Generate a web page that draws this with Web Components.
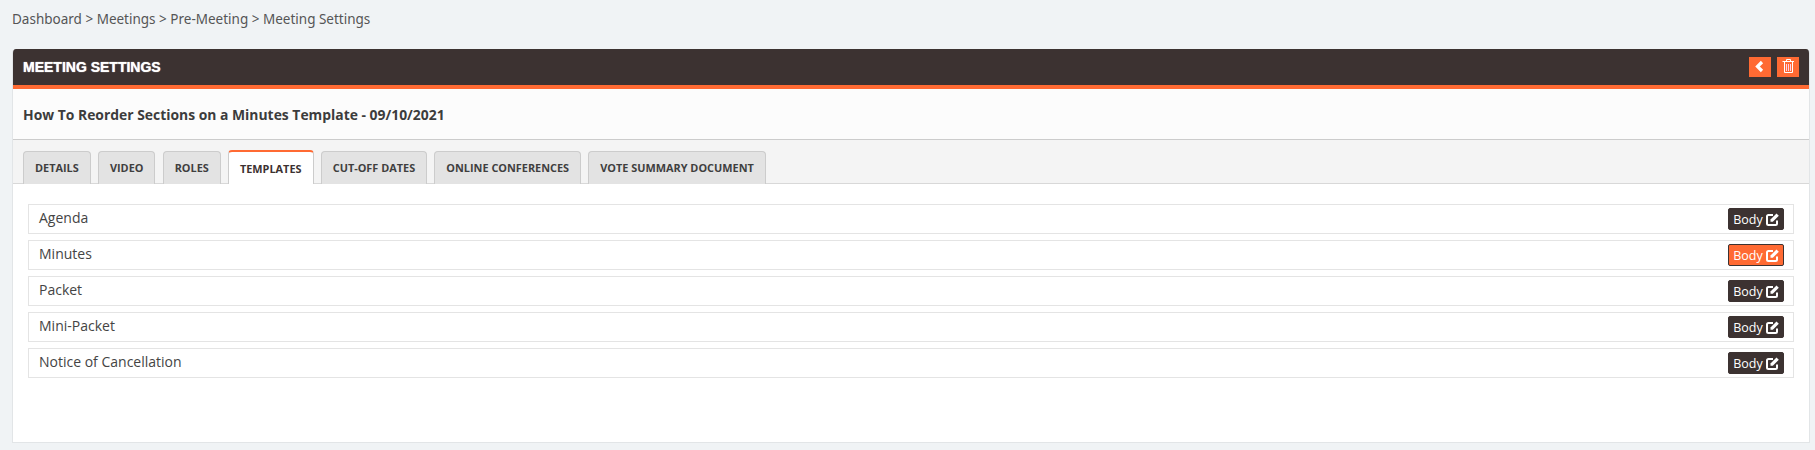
<!DOCTYPE html>
<html>
<head>
<meta charset="utf-8">
<title>Meeting Settings</title>
<style>
  html, body { margin: 0; height: 450px; overflow: hidden; }
  body { background: #f0f3f5; font-family: "Open Sans", sans-serif; color: #3c3231; }
</style>
</head>
<body>
<template id="crumbs-tpl">
  <style>
    :host { display: block; height: 49px; box-sizing: border-box; padding: 10px 0 0 12px; font: 13.5px/18px "Noto Sans", sans-serif; color: #555; }
  </style>
  <slot></slot>
</template>

<template id="panel-tpl">
  <style>
    :host { display: block; margin: 0 5px 0 12px; height: 394px; box-sizing: border-box; background: #fff; border: 1px solid #e2e5e7; border-top: 0; border-radius: 4px 4px 0 0; overflow: hidden; }
    header { height: 40px; box-sizing: border-box; background: #3c3231; border-bottom: 4px solid #ff6a33; display: flex; align-items: center; justify-content: space-between; padding: 0 10px; }
    h1 { margin: 0; font: bold 14px "Liberation Sans", sans-serif; color: #fff; text-shadow: 0 0 1px #fff; }
    .actions { display: flex; gap: 6px; }
    .sub { height: 51px; box-sizing: border-box; background: #fcfcfc; border-bottom: 1px solid #ccc; padding: 0 10px; display: flex; align-items: center; font: bold 13.9px "Open Sans", sans-serif; color: #3c3c3c; }
    .tabs { background: #f4f4f4; height: 44px; box-sizing: border-box; border-bottom: 1px solid #d8d8d8; padding: 10px 0 0 10px; display: flex; align-items: flex-end; gap: 7.2px; }
    .content { padding: 20px 15px 0 15px; display: flex; flex-direction: column; gap: 6px; }
  </style>
  <header>
    <h1><slot name="title"></slot></h1>
    <div class="actions"><slot name="actions"></slot></div>
  </header>
  <div class="sub"><slot name="sub"></slot></div>
  <div class="tabs"><slot name="tabs"></slot></div>
  <div class="content"><slot></slot></div>
</template>

<template id="icon-btn-tpl">
  <style>
    :host { display: block; width: 22px; height: 20px; background: #ff6a33; }
    svg { display: block; width: 22px; height: 20px; }
  </style>
  <svg viewBox="0 0 22 20" id="ic"></svg>
</template>

<template id="tab-tpl">
  <style>
    :host { display: block; height: 33px; box-sizing: border-box; margin-bottom: -1px; padding: 0 11px; background: #e3e3e3; border: 1px solid #ccc; border-bottom: 0; border-radius: 4px 4px 0 0; font: bold 10.9px/32px "Open Sans", sans-serif; color: #3f3f3f; white-space: nowrap; }
    :host([active]) { height: 34px; background: #fff; border-top: 2px solid #ff6a33; line-height: 33px; color: #3c3231; }
  </style>
  <slot></slot>
</template>

<template id="row-tpl">
  <style>
    :host { display: flex; align-items: center; justify-content: space-between; height: 30px; box-sizing: border-box; border: 1px solid #e4e4e4; padding: 0 9px 0 10px; font: 14px "Open Sans", sans-serif; color: #444; }
    span { padding-bottom: 3px; }
    button { all: unset; box-sizing: border-box; width: 56px; height: 22px; display: flex; align-items: center; justify-content: center; gap: 3px; background: #3c3231; border: 1px solid #3c3231; border-radius: 2px; color: #fff; font: 12.5px "Open Sans", sans-serif; }
    :host([active]) button { background: #ff6a33; }
    svg { width: 13px; height: 13px; display: block; }
  </style>
  <span><slot></slot></span>
  <button>Body
    <svg viewBox="0 0 13 13" fill="none" stroke="currentColor">
      <path d="M11 7.500V10.500A1.500 1.500 0 0 1 9.500 12H2.500A1.500 1.500 0 0 1 1 10.500V3.500A1.500 1.500 0 0 1 2.500 2H7" stroke-width="2"/>
      <path d="M4.500 6.500L10.500 .5L12.800 2.800L6.800 8.800L4.500 8.800Z" fill="currentColor" stroke="none"/>
    </svg>
  </button>
</template>

<breadcrumb-bar>Dashboard &gt; Meetings &gt; Pre-Meeting &gt; Meeting Settings</breadcrumb-bar>
<settings-panel>
  <span slot="title">MEETING SETTINGS</span>
  <icon-button slot="actions" icon="back"></icon-button>
  <icon-button slot="actions" icon="trash"></icon-button>
  <span slot="sub">How To Reorder Sections on a Minutes Template - 09/10/2021</span>
  <panel-tab slot="tabs">DETAILS</panel-tab>
  <panel-tab slot="tabs">VIDEO</panel-tab>
  <panel-tab slot="tabs">ROLES</panel-tab>
  <panel-tab slot="tabs" active>TEMPLATES</panel-tab>
  <panel-tab slot="tabs">CUT-OFF DATES</panel-tab>
  <panel-tab slot="tabs">ONLINE CONFERENCES</panel-tab>
  <panel-tab slot="tabs">VOTE SUMMARY DOCUMENT</panel-tab>
  <template-row>Agenda</template-row>
  <template-row active>Minutes</template-row>
  <template-row>Packet</template-row>
  <template-row>Mini-Packet</template-row>
  <template-row>Notice of Cancellation</template-row>
</settings-panel>

<script>
  const icons = {
    back: '<path d="M13 5L8.500 9.500L13 14" fill="none" stroke="#fff" stroke-width="3.200"/>',
    trash: '<g fill="none" stroke="#fff"><path d="M5.500 4.500H17M9.500 4.500V2.500H13.500V4.500M7.500 5V15.500H15.500V5"/><path d="M9.500 7V14M11.500 7V14M13.500 7V14" stroke="#ffd0e8"/></g>'
  };

  class PlainElement extends HTMLElement {
    constructor(tplId) {
      super();
      this.attachShadow({ mode: "open" });
      this.shadowRoot.appendChild(document.getElementById(tplId).content.cloneNode(true));
    }
  }

  class BreadcrumbBar extends PlainElement {
    constructor() { super("crumbs-tpl"); }
  }
  class SettingsPanel extends PlainElement {
    constructor() { super("panel-tpl"); }
  }
  class PanelTab extends PlainElement {
    constructor() { super("tab-tpl"); }
  }
  class TemplateRow extends PlainElement {
    constructor() { super("row-tpl"); }
  }
  class IconButton extends PlainElement {
    constructor() { super("icon-btn-tpl"); }
    connectedCallback() {
      this.shadowRoot.getElementById("ic").innerHTML = icons[this.getAttribute("icon")];
    }
  }

  window.customElements.define("breadcrumb-bar", BreadcrumbBar);
  window.customElements.define("settings-panel", SettingsPanel);
  window.customElements.define("panel-tab", PanelTab);
  window.customElements.define("template-row", TemplateRow);
  window.customElements.define("icon-button", IconButton);
</script>
</body>
</html>
